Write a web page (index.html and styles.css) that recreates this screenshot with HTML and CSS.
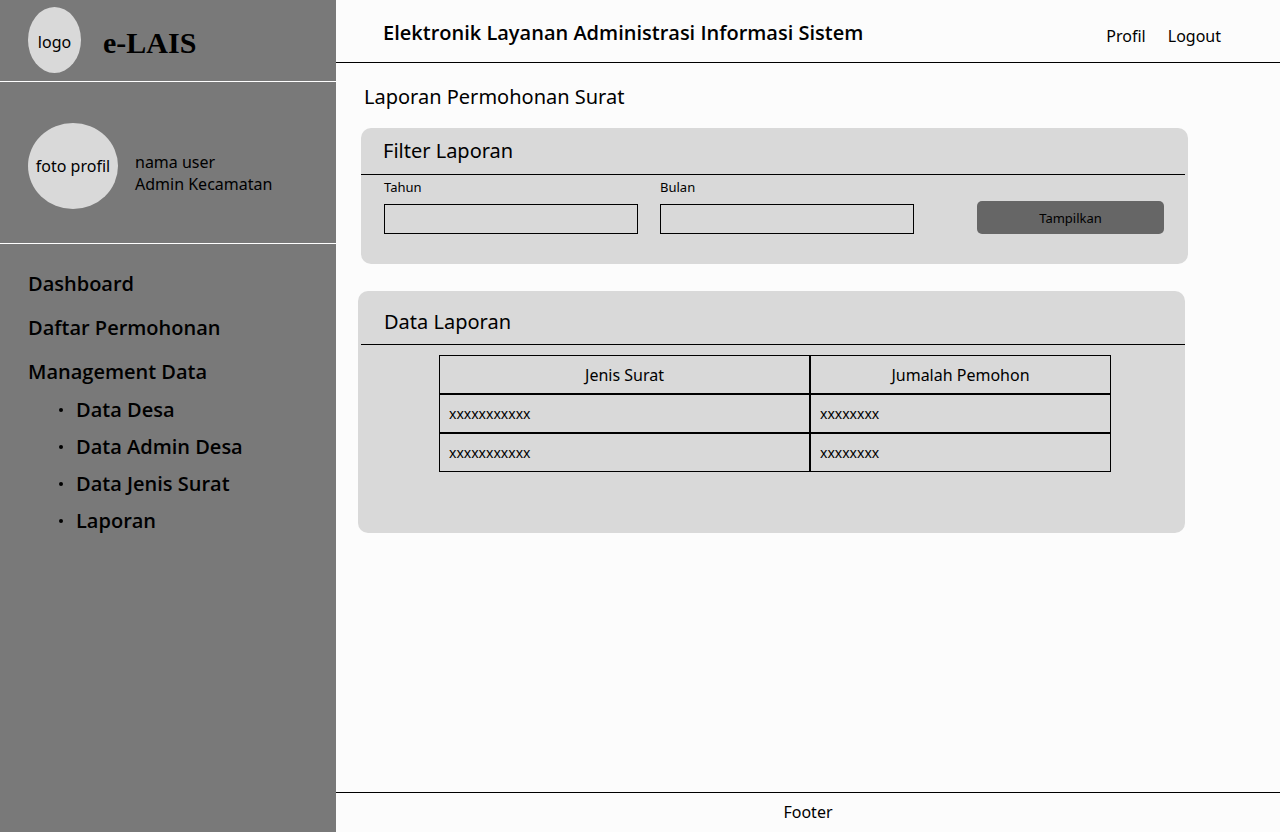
FILE: index.html
```html
<!DOCTYPE html>
<html lang="id">
<head>
<meta charset="utf-8">
<title>e-LAIS</title>
<link rel="stylesheet" href="styles.css">
</head>
<body>
<div class="app">
  <aside class="sidebar">
    <div class="brand">
      <div class="logo">logo</div>
      <div class="brand-name">e-LAIS</div>
    </div>
    <div class="user">
      <div class="avatar">foto profil</div>
      <div class="user-text">
        <div>nama user</div>
        <div>Admin Kecamatan</div>
      </div>
    </div>
    <nav class="menu">
      <a href="#">Dashboard</a>
      <a href="#">Daftar Permohonan</a>
      <a href="#">Management Data</a>
      <ul class="submenu">
        <li><a href="#">Data Desa</a></li>
        <li><a href="#">Data Admin Desa</a></li>
        <li><a href="#">Data Jenis Surat</a></li>
        <li><a href="#">Laporan</a></li>
      </ul>
    </nav>
  </aside>
  <div class="page">
    <header class="topbar">
      <div class="system-name">Elektronik Layanan Administrasi Informasi Sistem</div>
      <nav class="account">
        <a href="#">Profil</a>
        <a href="#">Logout</a>
      </nav>
    </header>
    <main class="content">
      <h1 class="title">Laporan Permohonan Surat</h1>
      <section class="card filter">
        <h2 class="card-title">Filter Laporan</h2>
        <form class="filter-form">
          <div class="field">
            <label for="tahun">Tahun</label>
            <input id="tahun" type="text">
          </div>
          <div class="field">
            <label for="bulan">Bulan</label>
            <input id="bulan" type="text">
          </div>
          <button class="submit" type="button">Tampilkan</button>
        </form>
      </section>
      <section class="card report">
        <h2 class="card-title">Data Laporan</h2>
        <div class="report-body">
          <table class="report-table">
            <thead>
              <tr><th class="kind" scope="col">Jenis Surat</th><th scope="col">Jumalah Pemohon</th></tr>
            </thead>
            <tbody>
              <tr><td>xxxxxxxxxxx</td><td>xxxxxxxx</td></tr>
              <tr><td>xxxxxxxxxxx</td><td>xxxxxxxx</td></tr>
            </tbody>
          </table>
        </div>
      </section>
    </main>
    <footer class="footer">Footer</footer>
  </div>
</div>
</body>
</html>
```

FILE: styles.css
```css
* {
  box-sizing: border-box;
}

body {
  margin: 0;
  font-family: "Noto Sans", "Open Sans", sans-serif;
  font-size: 16px;
  line-height: 22px;
  color: #000;
  background: #fcfcfc;
}

a {
  color: inherit;
  text-decoration: none;
}

.app {
  display: grid;
  grid-template-columns: 336px 1fr;
  min-height: 100vh;
}

.sidebar {
  background: #797979;
}

.brand {
  display: flex;
  align-items: center;
  gap: 22px;
  height: 82px;
  padding: 0 28px 2px;
  border-bottom: 1px solid #fff;
}

.logo,
.avatar {
  display: flex;
  align-items: center;
  justify-content: center;
  flex: none;
  border-radius: 50%;
  background: #d9d9d9;
  white-space: nowrap;
}

.logo {
  width: 53px;
  height: 66px;
  padding-top: 4px;
}

.brand-name {
  padding-top: 6px;
  font-family: "Liberation Serif", serif;
  font-size: 30px;
  font-weight: 700;
  line-height: 36px;
}

.user {
  display: flex;
  align-items: center;
  gap: 17px;
  height: 162px;
  padding: 6px 28px 0;
  border-bottom: 1px solid #fff;
}

.avatar {
  width: 90px;
  height: 86px;
}

.user-text {
  padding-top: 14px;
}

.menu {
  display: flex;
  flex-direction: column;
  gap: 16px;
  padding: 26px 28px;
  font-family: "Open Sans", "Noto Sans", sans-serif;
  font-size: 20px;
  font-weight: 600;
  line-height: 28px;
}

.submenu {
  display: flex;
  flex-direction: column;
  gap: 9px;
  margin: -6px 0 0;
  padding: 0 0 0 31px;
  list-style: none;
}

.submenu li {
  display: flex;
  align-items: center;
  gap: 13px;
}

.submenu li::before {
  content: "";
  width: 4px;
  height: 4px;
  border-radius: 50%;
  background: #000;
}

.page {
  display: flex;
  flex-direction: column;
}

.topbar {
  display: flex;
  align-items: center;
  justify-content: space-between;
  height: 63px;
  padding: 5px 59px 0 47px;
  border-bottom: 1px solid #000;
}

.system-name {
  padding-bottom: 2px;
  font-family: "Open Sans", "Noto Sans", sans-serif;
  font-size: 20px;
  font-weight: 600;
  line-height: 28px;
}

.account {
  display: flex;
  gap: 22px;
  padding-top: 4px;
}

.content {
  flex: 1;
  padding: 20px 92px 24px 22px;
}

.title,
.card-title {
  margin: 0;
  font-size: 20px;
  font-weight: 400;
  line-height: 28px;
}

.title {
  padding-left: 6px;
}

.card {
  border-radius: 10px;
  background: #d9d9d9;
}

.card-title {
  border-bottom: 1px solid #000;
}

.filter {
  margin: 17px 0 27px 3px;
  padding-bottom: 30px;
}

.filter .card-title {
  margin-right: 3px;
  padding: 9px 22px;
}

.filter-form {
  display: grid;
  grid-template-columns: 254fr 254fr 228fr;
  align-items: end;
  column-gap: 22px;
  padding: 2px 24px 0 23px;
  font-size: 13px;
  line-height: 20px;
}

.field {
  display: flex;
  flex-direction: column;
  gap: 7px;
}

.field input {
  width: 100%;
  height: 30px;
  padding: 0 8px;
  border: 1px solid #000;
  border-radius: 0;
  background: transparent;
  font: inherit;
}

.submit {
  height: 33px;
  margin-left: 41px;
  border: 0;
  border-radius: 5px;
  background: #666;
  color: #000;
  font: inherit;
}

.report {
  margin-right: 3px;
  padding-bottom: 61px;
}

.report .card-title {
  margin-left: 3px;
  padding: 17px 23px 8px;
}

.report-body {
  padding: 10px 74px 0 81px;
}

.report-table {
  width: 100%;
  border-spacing: 0;
  table-layout: fixed;
}

.report-table th,
.report-table td {
  height: 39px;
  padding: 0 9px;
  border: 1px solid #000;
  font-weight: 400;
  text-align: left;
}

.report-table td {
  font-size: 14px;
}

.report-table th {
  text-align: center;
}

.report-table .kind {
  width: 371px;
}

.footer {
  height: 40px;
  padding: 8px 0;
  border-top: 1px solid #000;
  text-align: center;
}
```
